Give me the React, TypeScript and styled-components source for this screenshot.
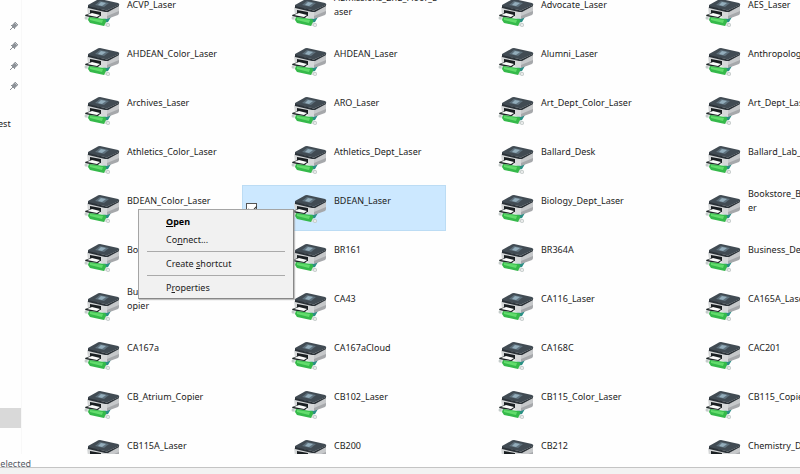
import React from "react";
import styled, { createGlobalStyle } from "styled-components";

const GlobalStyle = createGlobalStyle`
  * { box-sizing: border-box; }
  body {
    margin: 0;
    overflow: hidden;
    background: #fefefe;
    color: #1c1c1c;
    font-family: "Noto Sans", "Open Sans", sans-serif;
    font-size: 9px;
    line-height: 14px;
  }
`;

const Window = styled.div`
  display: flex;
  flex-direction: column;
  height: 100vh;
  overflow: hidden;
`;

const Body = styled.main`
  display: flex;
  flex: 1;
  min-height: 0;
  overflow: hidden;
`;

const Sidebar = styled.nav`
  display: flex;
  flex-direction: column;
  flex: none;
  width: 22px;
  padding-top: 16px;
  border-right: 1px solid #f8f8f8;
`;

const PinSlot = styled.span`
  display: flex;
  align-items: center;
  justify-content: center;
  height: 20px;
  padding-left: 7px;
`;

const SidebarLink = styled.a`
  margin-top: 21px;
  color: inherit;
  text-decoration: none;
  text-indent: -2px;
  white-space: nowrap;
`;

const CurrentFolder = styled.span`
  height: 20px;
  margin: auto 0 26px 0;
  background: #d9d9d9;
`;

const Files = styled.ul`
  display: grid;
  flex: 1;
  grid-template-columns: repeat(4, 204px);
  grid-auto-rows: 46px;
  gap: 3px;
  margin: -11px 0 0;
  padding: 0 0 0 13px;
  list-style: none;
`;

const Tile = styled.li<{ $selected?: boolean }>`
  display: flex;
  padding-left: 4px;
  background: ${(p) => (p.$selected ? "#cce8ff" : "transparent")};
  outline: ${(p) => (p.$selected ? "1px solid #bcdcf4" : "none")};
  outline-offset: -1px;
`;

const CheckSlot = styled.span`
  display: flex;
  align-items: center;
  flex: none;
  width: 45px;
`;

const Check = styled.input`
  appearance: none;
  width: 11px;
  height: 11px;
  margin: 0;
  border: 1px solid #555;
  background: #fff;

  &:checked::before {
    content: "";
    display: block;
    width: 4px;
    height: 7px;
    margin: 0 0 0 3px;
    border: solid #333;
    border-width: 0 1px 1px 0;
    transform: rotate(42deg);
  }
`;

const Label = styled.label`
  display: flex;
  gap: 7px;
`;

const PrinterSvg = styled.svg`
  flex: none;
  width: 36px;
  height: 32px;
  margin-top: 9px;
`;

const Name = styled.span`
  display: flex;
  align-items: center;
  height: 32px;
  white-space: pre;
`;

const Status = styled.div`
  display: flex;
  justify-content: flex-end;
  flex: none;
  width: 31px;
  height: 13px;
  padding-top: 3px;
  color: #555b66;
  overflow: hidden;
`;

const Footer = styled.footer`
  flex: none;
  height: 7px;
  border-top: 1px solid #c4c4c4;
  background: #f2f2f2;
`;

const Menu = styled.div`
  position: absolute;
  top: 209px;
  left: 138px;
  width: 156px;
  padding: 3px 8px 1px;
  border: 1px solid #a5a5a5;
  border-right-color: #888;
  border-bottom-color: #888;
  background: #f1f1f1;
  box-shadow: 1px 1px 1px #9999;
`;

const MenuItem = styled.button<{ $primary?: boolean }>`
  display: block;
  width: 100%;
  height: 18px;
  padding: 0 0 0 19px;
  border: 0;
  background: none;
  color: ${(p) => (p.$primary ? "#000" : "#222")};
  font: inherit;
  font-weight: ${(p) => (p.$primary ? 700 : 400)};
  text-align: left;

  u { text-underline-offset: 1px; }
`;

const Separator = styled.hr`
  height: 1px;
  margin: 2px 0 3px;
  border: 0;
  background: #aaa;
`;

const printers = [
  "ACVP_Laser", "Admissions_2nd_Floor_L\naser", "Advocate_Laser", "AES_Laser",
  "AHDEAN_Color_Laser", "AHDEAN_Laser", "Alumni_Laser", "Anthropology_Laser",
  "Archives_Laser", "ARO_Laser", "Art_Dept_Color_Laser", "Art_Dept_Laser",
  "Athletics_Color_Laser", "Athletics_Dept_Laser", "Ballard_Desk", "Ballard_Lab_Laser",
  "BDEAN_Color_Laser", "BDEAN_Laser", "Biology_Dept_Laser", "Bookstore_Back_Las\ner",
  "Bookstore_Laser", "BR161", "BR364A", "Business_Dept_Laser",
  "Business_Office_C\nopier", "CA43", "CA116_Laser", "CA165A_Laser",
  "CA167a", "CA167aCloud", "CA168C", "CAC201",
  "CB_Atrium_Copier", "CB102_Laser", "CB115_Color_Laser", "CB115_Copier",
  "CB115A_Laser", "CB200", "CB212", "Chemistry_Dept_Laser",
];

function PrinterIcon() {
  return (
    <PrinterSvg viewBox="0 0 36 32" aria-hidden="true">
      <path d="M18 21 27 19 24 24 20 25Z" fill="#2a8f86" />
      <path d="M3 9 23 13 23 21 4 17Z" fill="#d6d8d9" />
      <path d="M23 13 35 7 35 15Q35 16 34 17L23 21Z" fill="#a6a8ab" />
      <path d="M23 14 35 8 35 13 23 18Z" fill="#c6c8ca" />
      <path d="M4 7 13 2Q14 1 16 1L34 5Q36 6 35 7L24 12Q23 13 21 12L4 9Z" fill="#414b53" />
      <path d="M4 8 21 12Q23 13 24 12L35 7V8L24 14Q23 14 21 14L4 10Z" fill="#2b3238" />
      <path d="M16 3 25 5 20 9 11 7Z" fill="#5f717d" />
      <path d="M17 4 22 5 18 8 14 7Z" fill="#93adbb" />
      <path d="M6 12 17 14V18L6 16Z" fill="#1a1f22" />
      <path d="M1 17 7 15 17 17 14 20 2 19Z" fill="#1c2324" />
      <path d="M3 17 8 15 16 17 13 19Z" fill="#fbfbfb" />
      <path d="M1 18 6 19 6 23 1 21Z" fill="#dfe5e3" />
      <path d="M20 24 25 25 26 28 20 28Z" fill="#dce1df" />
      <circle cx="2" cy="20" r="1.5" fill="#c4ccca" />
      <circle cx="24" cy="27" r="2" fill="#c5cbca" />
      <circle cx="24" cy="27" r="1" fill="#f3f4f4" />
      <path d="M5 19 21 21Q23 22 22 24L20 28 6 25 4 22Z" fill="#35b94a" />
      <path d="M6 20 19 22 18 25 6 22Z" fill="#62dc6c" />
    </PrinterSvg>
  );
}

function Pin() {
  return (
    <svg width="10" height="10" viewBox="0 0 10 10" aria-hidden="true">
      <path d="M5 1 9 5 8 5 6 7 6 8 2 4 3 4 5 2Z" fill="#8d9298" />
      <path d="M6 1 9 4M4 6 1 9M2 4 6 8" stroke="#8d9298" fill="none" />
    </svg>
  );
}

export default function App() {
  return (
    <>
      <GlobalStyle />
      <Window>
        <Body>
          <Sidebar>
            {[0, 1, 2, 3].map((n) => <PinSlot key={n}><Pin /></PinSlot>)}
            <SidebarLink href="#">est</SidebarLink>
            <CurrentFolder />
          </Sidebar>
          <Files>
            {printers.map((name) => {
              const selected = name === "BDEAN_Laser";
              return (
                <Tile key={name} $selected={selected}>
                  <CheckSlot>
                    {selected && <Check id={name} type="checkbox" defaultChecked />}
                  </CheckSlot>
                  <Label htmlFor={selected ? name : undefined}>
                    <PrinterIcon />
                    <Name>{name}</Name>
                  </Label>
                </Tile>
              );
            })}
          </Files>
        </Body>
        <Status>elected</Status>
        <Footer />
      </Window>
      <Menu role="menu">
        <MenuItem role="menuitem" $primary><u>O</u>pen</MenuItem>
        <MenuItem role="menuitem">Co<u>n</u>nect...</MenuItem>
        <Separator />
        <MenuItem role="menuitem">Create <u>s</u>hortcut</MenuItem>
        <Separator />
        <MenuItem role="menuitem">P<u>r</u>operties</MenuItem>
      </Menu>
    </>
  );
}
